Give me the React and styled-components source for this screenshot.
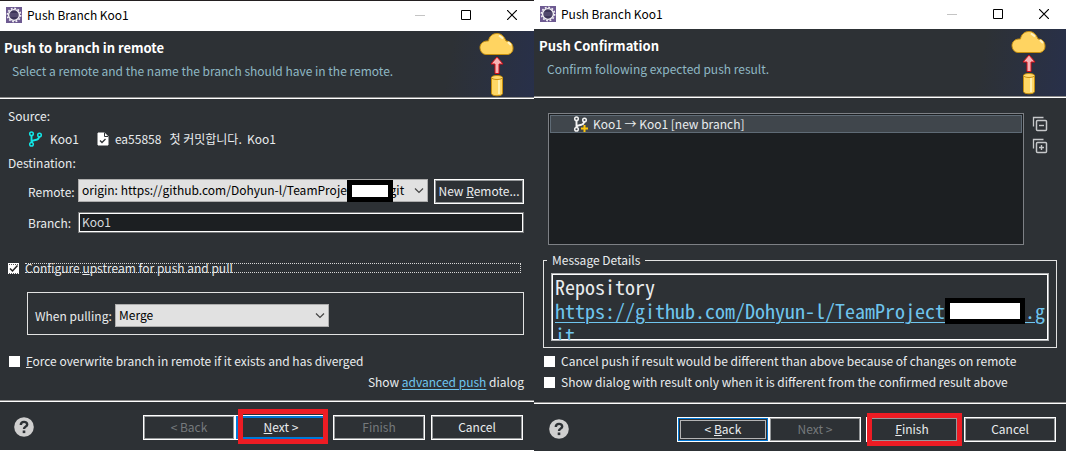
import React from "react";
import styled, { createGlobalStyle, css } from "styled-components";

const c = {
  bg: "#2d3135",
  field: "#1c1f22",
  text: "#e9ecee",
  soft: "#8fb8c4",
  link: "#6fc5ee",
  dim: "#75797c",
  combo: "#e1e1e1",
  edge: "#adadad",
  focus: "#0078d7",
  mark: "#ed1c24",
};

const Global = createGlobalStyle`
  *, *::before, *::after { box-sizing: border-box; }
  body { margin: 0; background: #fff; }
  body, button, input, select {
    font-family: "Noto Sans CJK KR", "Noto Sans", sans-serif;
    font-size: 12px;
    line-height: 16px;
  }
`;

const Desktop = styled.main`
  display: grid;
  grid-template-columns: 534fr 532fr;
  align-items: stretch;
  min-height: 100vh;
`;

const Dialog = styled.section`
  display: flex;
  flex-direction: column;
  min-width: 0;
  background: ${c.bg};
  color: ${c.text};
  border-top: ${(p) => (p.$framed ? "1px solid #231f20" : "0")};
  border-bottom: ${(p) => (p.$framed ? "1px solid #fff" : "0")};
`;

const TitleBar = styled.header`
  display: flex;
  align-items: center;
  height: ${(p) => (p.$compact ? 29 : 30)}px;
  padding: 0 14px 2px 6px;
  background: #fff;
  color: #000;
`;

const TitleText = styled.h1`
  flex: 1;
  margin: 0 0 0 5px;
  font-size: 12px;
  font-weight: 400;
  line-height: 16px;
`;

const WindowButtons = styled.div`
  display: flex;
  gap: 30px;
`;

const WindowButton = styled.button`
  display: flex;
  align-items: center;
  justify-content: center;
  width: 16px;
  height: 16px;
  padding: 0;
  border: 0;
  background: none;
  color: #000;
`;

const Banner = styled.div`
  display: flex;
  justify-content: space-between;
  height: ${(p) => (p.$compact ? 69 : 68)}px;
  padding-left: ${(p) => (p.$compact ? 5 : 4)}px;
  border-bottom: 1px solid #fff;
  box-shadow: inset 0 -1px #8d8d8d;
  background: linear-gradient(100deg, transparent calc(100% - 90px), #28304a) ${c.bg};
`;

const BannerTitle = styled.h2`
  margin: 9px 0 7px;
  font-size: 13px;
  font-weight: 700;
  line-height: 16px;
  color: #fff;
`;

const BannerText = styled.p`
  margin: 0 0 0 8px;
  color: ${c.soft};
`;

const BannerArt = styled.svg`
  flex: none;
  width: 36px;
  height: 66px;
  margin-right: 19px;
`;

const Body = styled.div`
  flex: 1;
  display: flex;
  flex-direction: column;
  padding: ${(p) => p.$pad};
`;

const SourceRow = styled.div`
  display: flex;
  align-items: center;
  height: 16px;
  margin: 7px 0 8px;
  padding-left: 20px;
`;

const SourceText = styled.span`
  margin: 0 ${(p) => p.$after || 0}px 0 6px;
  white-space: pre;
`;

const Form = styled.div`
  display: grid;
  grid-template-columns: 50px 1fr 96px;
  row-gap: 8px;
  align-items: center;
  margin-top: 8px;
  padding-left: 20px;

  & > label { white-space: nowrap; }
  & > button { justify-self: end; }
`;

const ComboWrap = styled.div`
  position: relative;
  display: flex;
  align-self: start;
  width: ${(p) => p.$width || "auto"};
  color: #444;

  & > svg { position: absolute; right: 4px; top: 8px; pointer-events: none; }
`;

const Combo = styled.select`
  appearance: none;
  width: 100%;
  height: 23px;
  padding: 0 16px 2px 3px;
  border: 1px solid ${c.edge};
  border-radius: 0;
  background: ${c.combo};
  color: #000;
`;

const Mask = styled.span`
  border: 5px solid #000;
  background: #fff;
`;

const ComboMask = styled(Mask)`
  position: absolute;
  top: 1px;
  right: 35px;
  width: 46px;
  height: 22px;
`;

const LinkMask = styled(Mask)`
  display: inline-block;
  width: 80px;
  height: 26px;
  margin: -4px 0;
  vertical-align: -1px;
`;

const TextBox = styled.input`
  grid-column: 2 / -1;
  height: 21px;
  padding: 0 3px 2px;
  border: 1px solid #77797b;
  box-shadow: inset 0 0 0 1px #fff;
  background: ${c.field};
  color: #d5d9dc;
`;

const Push = styled.button`
  flex: none;
  width: ${(p) => p.$width || 92}px;
  height: 25px;
  padding: 0 0 1px;
  border: 1px solid #fff;
  box-shadow: inset 0 0 0 1px #96999b;
  background: ${c.bg};
  color: ${c.text};
  white-space: nowrap;
  ${(p) => p.$primary && css`box-shadow: inset 0 0 0 2px ${c.focus};`}
  ${(p) => p.$focused && css`
    box-shadow: inset 0 0 0 1px ${c.focus}, inset 0 0 0 2px ${c.bg}, inset 0 0 0 3px #b4b4b4;
    outline: 0;
  `}
  &:disabled { color: ${c.dim}; }
`;

const Marked = styled.span`
  position: relative;
  display: flex;

  &::after {
    content: "";
    position: absolute;
    inset: ${(p) => p.$inset};
    border: 5px solid ${c.mark};
    pointer-events: none;
  }
`;

const Check = styled.label`
  display: flex;
  align-items: center;
  gap: 6px;
  height: 16px;
  margin-left: ${(p) => p.$inset || 0}px;
`;

const Tick = styled.input`
  appearance: none;
  flex: none;
  width: 11px;
  height: 11px;
  margin: 0;
  background: #fff;
`;

const TickBox = styled.span`
  position: relative;
  display: flex;
  flex: none;
  width: 11px;
  height: 11px;

  & > svg { position: absolute; inset: 0; pointer-events: none; }
`;

const CheckText = styled.span`
  white-space: nowrap;
  ${(p) => p.$focus && css`
    flex: 1;
    height: 10px;
    margin-right: 3px;
    line-height: 8px;
    border: 1px dotted #d8d8d8;
    border-left: 0;
  `}
`;

const UpstreamBlock = styled.div`
  margin-top: 27px;
`;

const PullGroup = styled.div`
  display: flex;
  align-items: center;
  gap: 2px;
  height: 43px;
  margin: 16px 0 18px 19px;
  padding: 4px 0 0 7px;
  border: 1px solid #e2e2e2;

  & > label { width: 78px; }
  & > div { align-self: center; }
`;

const Hint = styled.p`
  margin: 5px 0 0;
  text-align: right;
`;

const Link = styled.a`
  color: ${c.link};
  text-decoration: underline;
  text-underline-offset: 2px;
`;

const Footer = styled.footer`
  display: flex;
  align-items: flex-start;
  height: ${(p) => p.$height}px;
  padding: 13px ${(p) => p.$right}px 0 ${(p) => p.$left}px;
  border-top: 1px solid #fff;
  box-shadow: 0 -1px #8d8d8d;
`;

const HelpButton = styled.button`
  display: flex;
  margin: 2px auto 0 0;
  padding: 0;
  border: 0;
  background: none;
`;

const Gap = styled.span`
  flex: none;
  width: ${(p) => p.$width || 6}px;
`;

const ResultArea = styled.div`
  display: grid;
  grid-template-columns: 1fr 16px;
  gap: 8px;
  padding: 0 9px 0 5px;
`;

const ResultTree = styled.ul`
  height: 132px;
  margin: 0;
  padding: 1px;
  border: 1px solid #7d8085;
  background: ${c.field};
  list-style: none;
`;

const ResultRow = styled.li`
  display: flex;
  align-items: center;
  gap: 4px;
  height: 18px;
  padding-left: 22px;
  border: 1px solid #5f6b76;
  background: #40464c;
`;

const TreeTools = styled.div`
  display: flex;
  flex-direction: column;
  gap: 6px;
  padding-top: 3px;
`;

const Details = styled.fieldset`
  min-width: 0;
  margin: 7px 0 5px;
  padding: 5px 7px 6px;
  border: 1px solid #e2e2e2;

  & > legend { margin-left: -4px; padding: 0 5px; }
`;

const Message = styled.div`
  height: 68px;
  overflow: hidden;
  padding: 1px 0 0 3px;
  border: 1px solid #b0b2b4;
  box-shadow: inset 0 0 0 1px #fff;
  font-family: "Noto Sans Mono CJK KR", "Liberation Mono", monospace;
  font-size: 20px;
  line-height: 24px;
  word-break: break-all;

  & > a { text-underline-offset: 3px; text-decoration-thickness: 1px; }
`;

const Checks = styled.div`
  display: flex;
  flex-direction: column;
  gap: 5px;
  padding-left: 1px;
`;

const EclipseIcon = () => (
  <svg width="16" height="16" viewBox="0 0 16 16">
    <rect width="16" height="16" fill="#6d5a91" />
    <circle cx="8" cy="8" r="6.6" fill="none" stroke="#f3f1f5" strokeWidth="1.6" strokeDasharray="1.8 1.66" />
    <circle cx="8" cy="8" r="5.4" fill="#3c3458" stroke="#f3f1f5" strokeWidth="1.4" />
    <path d="M4 7h8M4 9h8" stroke="#74698f" strokeWidth=".8" />
  </svg>
);

const CloudPush = () => (
  <BannerArt viewBox="0 0 36 66">
    <path d="M7 23.5h22a6 6 0 0 0 5-6.500c0-4-3-7-7-7C25 5 22 2.500 18 2.500c-5 0-8 3.500-8.500 7.500C4 9.500 1 13 1 16.500s2.500 7 6 7z" fill="#ffd461" stroke="#c58e0e" />
    <path d="M20 4.500l4 3M29 11l3 3" stroke="#fff3c4" strokeWidth="2" />
    <path d="M18 26l6 7h-4v9.500h-4V33h-4z" fill="#f7b3b5" stroke="#d80f16" />
    <path d="M12.500 46.500v16c0 3 11 3 11 0v-16" fill="#ffd765" stroke="#c58e0e" />
    <path d="M20 48v15" stroke="#fff0b0" strokeWidth="2" />
    <ellipse cx="18" cy="46.500" rx="5.500" ry="2" fill="#ffda70" stroke="#c58e0e" />
  </BannerArt>
);

const BranchShape = ({ color }) => (
  <g fill="none" stroke={color} strokeWidth="1.500">
    <circle cx="3.500" cy="2.700" r="1.800" />
    <circle cx="3.500" cy="13.300" r="1.800" />
    <circle cx="11.500" cy="4" r="1.800" />
    <path d="M3.500 4.500v7M3.500 10.500c2-2 5-1 6.500-2.500 1-1 1-1.500 1.200-2.300" strokeWidth="1.900" />
  </g>
);

const BranchIcon = () => (
  <svg width="16" height="16" viewBox="0 0 16 16"><BranchShape color="#12e6e6" /></svg>
);

const NewBranchIcon = () => (
  <svg width="16" height="16" viewBox="0 0 16 16">
    <BranchShape color="#f2f2f2" />
    <path d="M11.500 9v7M8 12.500h7" stroke="#40464c" strokeWidth="4" />
    <path d="M11.500 9v7M8 12.500h7" stroke="#fcc50b" strokeWidth="2" />
  </svg>
);

const CommitIcon = () => (
  <svg width="12" height="14" viewBox="0 0 12 14">
    <path d="M1 1h6.500L11 4.500V13H1z" fill="#fff" stroke="#fff" strokeLinejoin="round" />
    <path d="M7.500 1v3.500H11" fill="none" stroke="#2d3135" />
    <path d="M3 8.500l2 2L8.500 7" fill="none" stroke="#2d3135" strokeWidth="1.300" />
  </svg>
);

const Chevron = () => (
  <svg width="10" height="7" viewBox="0 0 10 7"><path d="M1 1.500l4 4 4-4" fill="none" stroke="currentColor" strokeWidth="1.200" /></svg>
);

const HelpIcon = () => (
  <svg width="20" height="20" viewBox="0 0 20 20">
    <circle cx="10" cy="10" r="9.800" fill="#cfcfcf" />
    <path d="M6.800 8c0-4 6.400-4 6.400-.6 0 2.200-3.200 2.300-3.200 4.600" fill="none" stroke="#2d3135" strokeWidth="2.400" />
    <rect x="8.700" y="13.500" width="2.600" height="2.600" fill="#2d3135" />
  </svg>
);

const TreeIcon = ({ plus }) => (
  <svg width="16" height="16" viewBox="0 0 16 16" fill="none" stroke="#c6c8ca">
    <path d="M1.500 10.500v-9h10" strokeWidth="1.300" />
    <rect x="4.500" y="4.500" width="10" height="10" rx="1" strokeWidth="1.500" />
    <path d={plus ? "M7 9.500h5M9.500 7v5" : "M7 9.500h5"} strokeWidth="1.400" />
  </svg>
);

const Title = ({ compact }) => (
  <TitleBar $compact={compact}>
    <EclipseIcon />
    <TitleText>Push Branch Koo1</TitleText>
    <WindowButtons>
      <WindowButton aria-label="Minimize" disabled>
        <svg width="10" height="10"><path d="M0 5.500h10" stroke="#c4c4c4" /></svg>
      </WindowButton>
      <WindowButton aria-label="Maximize">
        <svg width="10" height="10"><path d="M.5.5h9v9h-9z" fill="none" stroke="currentColor" /></svg>
      </WindowButton>
      <WindowButton aria-label="Close">
        <svg width="10" height="10"><path d="M0 0l10 10M10 0L0 10" stroke="currentColor" strokeWidth="1.200" /></svg>
      </WindowButton>
    </WindowButtons>
  </TitleBar>
);

const Heading = ({ title, compact, children }) => (
  <Banner $compact={compact}>
    <div>
      <BannerTitle>{title}</BannerTitle>
      <BannerText>{children}</BannerText>
    </div>
    <CloudPush />
  </Banner>
);

const Help = () => (
  <HelpButton aria-label="Help"><HelpIcon /></HelpButton>
);

const PushBranchDialog = () => (
  <Dialog $framed>
    <Title />
    <Heading title="Push to branch in remote">
      Select a remote and the name the branch should have in the remote.
    </Heading>
    <Body $pad="9px 10px 0 8px">
      <div>Source:</div>
      <SourceRow>
        <BranchIcon />
        <SourceText $after={18}>Koo1</SourceText>
        <CommitIcon />
        <SourceText>{"ea55858   첫 커밋합니다.  Koo1"}</SourceText>
      </SourceRow>
      <div>Destination:</div>
      <Form>
        <label htmlFor="remote">Remote:</label>
        <ComboWrap>
          <Combo id="remote">
            <option>{"origin: https://github.com/Dohyun-l/TeamProject" + "\u00a0".repeat(12) + "git"}</option>
          </Combo>
          <ComboMask />
          <Chevron />
        </ComboWrap>
        <Push $width={90}>New <u>R</u>emote...</Push>
        <label htmlFor="branch">Branch:</label>
        <TextBox id="branch" defaultValue="Koo1" />
      </Form>
      <UpstreamBlock>
        <Check>
          <TickBox>
            <Tick type="checkbox" id="upstream" defaultChecked />
            <svg width="11" height="11" viewBox="0 0 11 11">
              <path d="M2 5.500l2.500 2.500L9.500 2.500" fill="none" stroke="#222" strokeWidth="1.500" />
              <path d="M1 1.500h10M1 10.500h10" stroke="#555" strokeDasharray="1 1" />
            </svg>
          </TickBox>
          <CheckText $focus>Configure <u>u</u>pstream for push and pull</CheckText>
        </Check>
      </UpstreamBlock>
      <PullGroup>
        <label htmlFor="pulling">When pulling:</label>
        <ComboWrap $width="214px">
          <Combo id="pulling"><option>Merge</option></Combo>
          <Chevron />
        </ComboWrap>
      </PullGroup>
      <Check $inset={1}>
        <Tick type="checkbox" />
        <CheckText><u>F</u>orce overwrite branch in remote if it exists and has diverged</CheckText>
      </Check>
      <Hint>Show <Link href="#advanced">advanced push</Link> dialog</Hint>
    </Body>
    <Footer $height={49} $left={14} $right={11}>
      <Help />
      <Push disabled>&lt; Back</Push>
      <Marked $inset="-6px -1px -4px 3px"><Push $primary><u>N</u>ext &gt;</Push></Marked>
      <Gap />
      <Push disabled>Finish</Push>
      <Gap />
      <Push>Cancel</Push>
    </Footer>
  </Dialog>
);

const ConfirmationDialog = () => (
  <Dialog>
    <Title compact />
    <Heading title="Push Confirmation" compact>Confirm following expected push result.</Heading>
    <Body $pad="15px 9px 0 9px">
      <ResultArea>
        <ResultTree>
          <ResultRow><NewBranchIcon />Koo1 → Koo1 [new branch]</ResultRow>
        </ResultTree>
        <TreeTools>
          <WindowButton aria-label="Collapse all"><TreeIcon /></WindowButton>
          <WindowButton aria-label="Expand all"><TreeIcon plus /></WindowButton>
        </TreeTools>
      </ResultArea>
      <Details>
        <legend>Message Details</legend>
        <Message>
          Repository<br />
          <Link href="#repository">https://github.com/Dohyun-l/TeamProject<LinkMask />.git</Link>
        </Message>
      </Details>
      <Checks>
        <Check>
          <Tick type="checkbox" />
          <CheckText>Cancel push if result would be different than above because of changes on remote</CheckText>
        </Check>
        <Check>
          <Tick type="checkbox" />
          <CheckText>Show dialog with result only when it is different from the confirmed result above</CheckText>
        </Check>
      </Checks>
    </Body>
    <Footer $height={48} $left={15} $right={10}>
      <Help />
      <Push $focused>&lt; <u>B</u>ack</Push>
      <Push disabled>Next &gt;</Push>
      <Gap $width={5} />
      <Marked $inset="-4px -4px -4px 1px"><Push><u>F</u>inish</Push></Marked>
      <Gap />
      <Push>Cancel</Push>
    </Footer>
  </Dialog>
);

export default function App() {
  return (
    <>
      <Global />
      <Desktop>
        <PushBranchDialog />
        <ConfirmationDialog />
      </Desktop>
    </>
  );
}
